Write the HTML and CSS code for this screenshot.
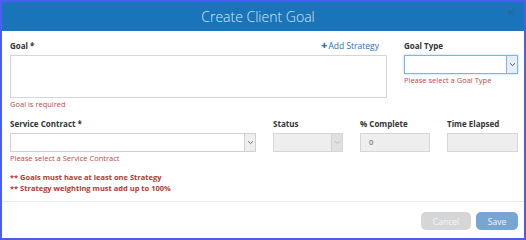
FILE: index.html
```html
<!DOCTYPE html>
<html lang="en">
<head>
  <meta charset="UTF-8" />
  <title>Create Client Goal</title>
  <link rel="stylesheet" href="styles.css">
</head>
<body>
  <div class="modal">
    <header class="modal-header">
      <h1>Create Client Goal</h1>
      <span class="close">&times;</span>
    </header>

    <div class="modal-body">
      <!-- goal + goal type -->
      <div class="row row-top">
        <div class="field">
          <div class="label-row">
            <label>Goal *</label>
            <a class="add-link" href="#"><span class="plus">+</span>Add Strategy</a>
          </div>
          <div class="textarea"></div>
          <div class="error">Goal is required</div>
        </div>
        <div class="field">
          <label>Goal Type</label>
          <div class="select focused">
            <span class="caret"><svg width="7" height="5" viewBox="0 0 7 5"><path d="M1 1.2 L3.5 3.6 L6 1.2" fill="none" stroke="#555" stroke-width="1"/></svg></span>
          </div>
          <div class="error">Please select a Goal Type</div>
        </div>
      </div>

      <!-- contract row -->
      <div class="row row-bottom">
        <div class="field">
          <label>Service Contract *</label>
          <div class="select">
            <span class="caret"><svg width="7" height="5" viewBox="0 0 7 5"><path d="M1 1.2 L3.5 3.6 L6 1.2" fill="none" stroke="#777" stroke-width="1"/></svg></span>
          </div>
          <div class="error">Please select a Service Contract</div>
        </div>
        <div class="field">
          <label>Status</label>
          <div class="select disabled">
            <span class="caret"><svg width="7" height="5" viewBox="0 0 7 5"><path d="M1 1.2 L3.5 3.6 L6 1.2" fill="none" stroke="#bbb" stroke-width="1"/></svg></span>
          </div>
        </div>
        <div class="field">
          <label>% Complete</label>
          <div class="input disabled">0</div>
        </div>
        <div class="field">
          <label>Time Elapsed</label>
          <div class="input disabled"></div>
        </div>
      </div>

      <div class="notes">
        <p>** Goals must have at least one Strategy</p>
        <p>** Strategy weighting must add up to 100%</p>
      </div>
    </div>

    <footer class="modal-footer">
      <button class="btn btn-cancel" type="button">Cancel</button>
      <button class="btn btn-save" type="button">Save</button>
    </footer>
  </div>
</body>
</html>
```

FILE: styles.css
```css
* {
  margin: 0;
  padding: 0;
  box-sizing: border-box;
  font-family: 'Open Sans', sans-serif;
}
body {
  background: #fff;
  color: #333;
}
/* Modal frame */
.modal {
  width: 526px;
  height: 240px;
  border: 2px solid #4a5ff0;
  display: flex;
  flex-direction: column;
  background: #fff;
}
.modal-header {
  position: relative;
  height: 29px;
  background: #1a74b9;
  display: flex;
  justify-content: center;
  align-items: center;
  padding-right: 10px;
}
.modal-header h1 {
  font-size: 14px;
  font-weight: 300;
  color: #d8e7f5;
}
.modal-header .close {
  position: absolute;
  right: 10px;
  top: 2px;
  font-size: 12px;
  color: #2f5f8c;
}
/* Body */
.modal-body {
  padding: 9px 6px 8px 8px;
}
.row {
  display: grid;
  column-gap: 17px;
}
.row-top {
  grid-template-columns: 377px 114px;
}
.row-bottom {
  grid-template-columns: 246px 70px 70px 71px;
  margin-top: 9px;
}
.field label {
  display: block;
  font-size: 8px;
  font-weight: 700;
  line-height: 12px;
  color: #333;
  margin-bottom: 3px;
}
.label-row {
  display: flex;
  justify-content: space-between;
  align-items: flex-start;
}
.add-link {
  font-size: 8.5px;
  line-height: 10px;
  color: #2d6eb5;
  text-decoration: none;
  margin-right: 8px;
}
.add-link .plus {
  font-weight: 800;
  font-size: 11px;
  margin-right: 1px;
}
.textarea {
  height: 43px;
  border: 1px solid #d6d6d6;
}
.select,
.input {
  position: relative;
  height: 19px;
  border: 1px solid #d0d0d0;
  font-size: 7.5px;
  line-height: 17px;
  padding-left: 8px;
  color: #555;
}
.select .caret {
  position: absolute;
  top: 0;
  right: 0;
  bottom: 0;
  width: 11px;
  border-left: 1px solid #d0d0d0;
  background: #eee;
  display: flex;
  align-items: center;
  justify-content: center;
}
.select.focused {
  border-color: #7fb3e6;
  box-shadow: 0 0 2px rgba(102, 175, 233, 0.6);
}
.select.focused .caret {
  background: #e5f0fb;
  border-left-color: #7fb3e6;
}
.disabled {
  background: #eee;
  border-color: #d6d6d6;
}
.select.disabled .caret {
  background: #e0e0e0;
  border-left-color: #d0d0d0;
}
.error {
  font-size: 7.5px;
  line-height: 10px;
  margin-top: 1px;
  color: #b94a48;
}
.notes {
  margin-top: 9px;
}
.notes p {
  font-size: 7.5px;
  font-weight: 700;
  line-height: 10.5px;
  color: #b2372e;
}
/* Footer */
.modal-footer {
  flex: 1;
  border-top: 1px solid #e8e8e8;
  display: flex;
  justify-content: flex-end;
  align-items: flex-start;
  gap: 5px;
  padding: 10px 6px 0 0;
}
.btn {
  height: 18px;
  border: none;
  border-radius: 5px;
  font-size: 8.5px;
  color: #f2f6fa;
}
.btn-cancel {
  width: 50px;
  background: #d6d6d6;
}
.btn-save {
  width: 42px;
  background: #77a6d2;
}
```
